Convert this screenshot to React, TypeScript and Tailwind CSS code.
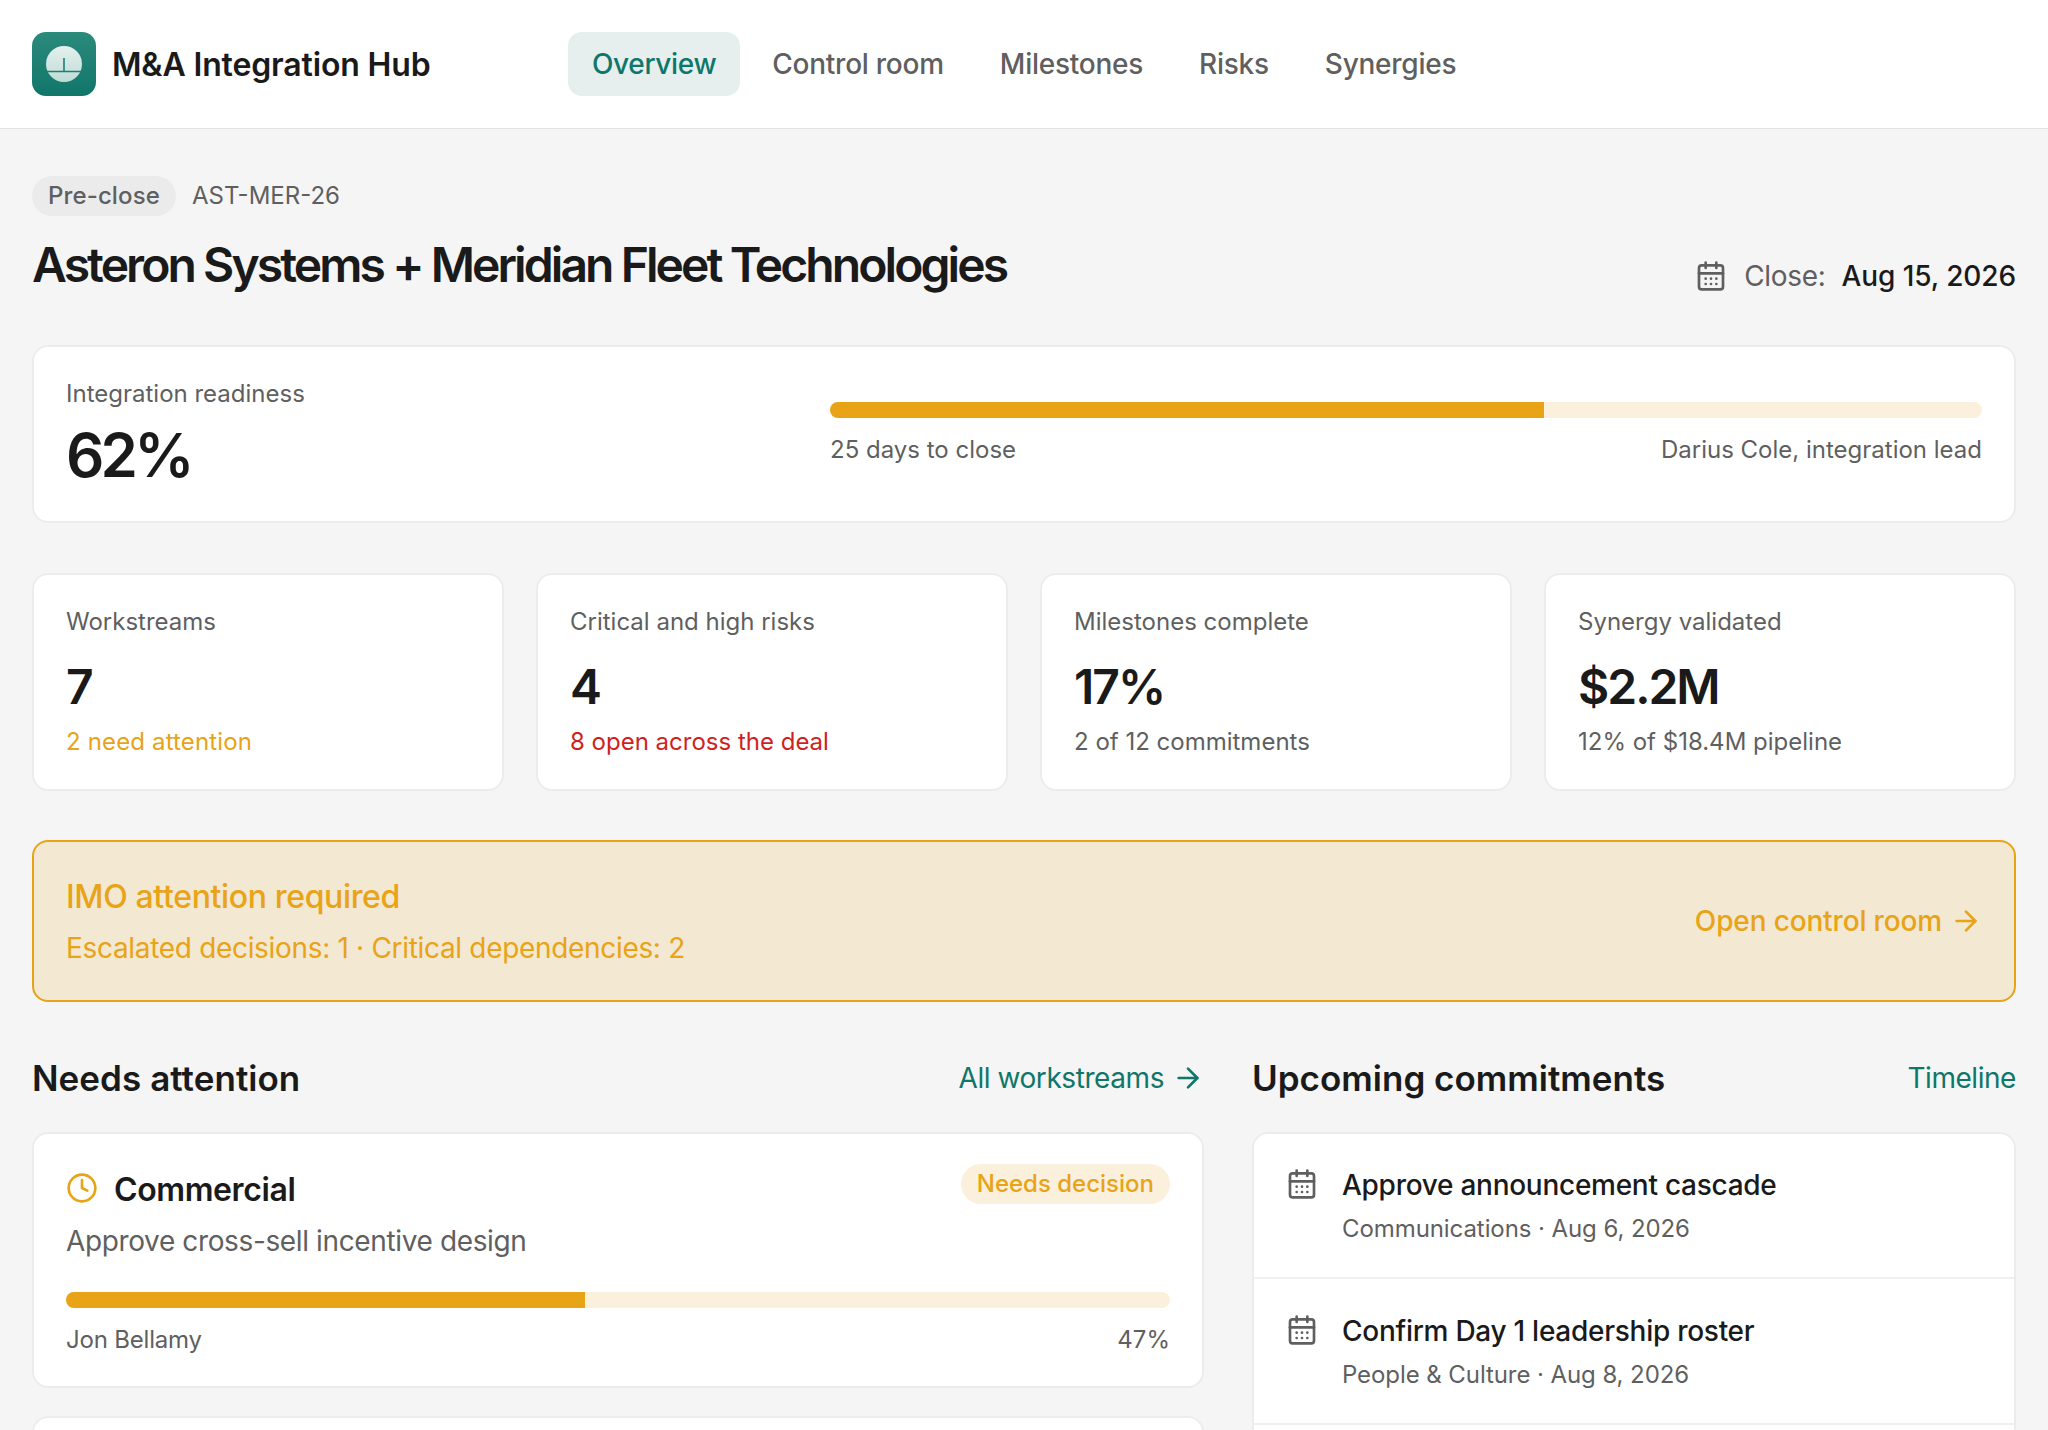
import { ArrowRight, CalendarDays, Clock } from 'lucide-react';

const navLinks = ['Control room', 'Milestones', 'Risks', 'Synergies'];

const stats = [
  { label: 'Workstreams', value: '7', note: '2 need attention', noteClass: 'text-[#e8a317] tracking-[0.15px]' },
  { label: 'Critical and high risks', value: '4', note: '8 open across the deal', noteClass: 'text-[#d01f1f]' },
  { label: 'Milestones complete', value: '17%', note: '2 of 12 commitments', noteClass: 'text-[#5f5f5f]' },
  { label: 'Synergy validated', value: '$2.2M', note: '12% of $18.4M pipeline', noteClass: 'text-[#5f5f5f]' },
];

const commitments = [
  { title: 'Approve announcement cascade', meta: 'Communications · Aug 6, 2026' },
  { title: 'Confirm Day 1 leadership roster', meta: 'People & Culture · Aug 8, 2026' },
];

function Logo() {
  return (
    <div className="flex h-16 w-16 items-center justify-center rounded-[14px] bg-gradient-to-b from-[#2a8a7c] to-[#0f766a]">
      <svg width="36" height="36" viewBox="0 0 36 36">
        <defs>
          <linearGradient id="dial" x1="0" y1="0" x2="0" y2="1">
            <stop offset="0" stopColor="#e4f0ee" />
            <stop offset="1" stopColor="#bfdcd7" />
          </linearGradient>
        </defs>
        <circle cx="18" cy="18" r="18" fill="url(#dial)" />
        <path d="M0 25.5H36" stroke="#1b7f72" strokeWidth="1.4" />
        <path d="M18 12V25" stroke="#1b7f72" strokeWidth="1.6" />
      </svg>
    </div>
  );
}

export default function App() {
  return (
    <div className="h-[1430px] overflow-hidden bg-[#f5f5f5] font-['Inter',sans-serif] text-[#1a1a1a]">
      <header className="flex h-[129px] items-center border-b border-[#e2e2e2] bg-white px-8">
        <div className="flex w-[536px] items-center gap-4">
          <Logo />
          <span className="pt-[2px] text-[32px] font-semibold tracking-[-0.15px]">M&amp;A Integration Hub</span>
        </div>
        <nav className="flex items-center gap-2 text-[28px] font-medium tracking-[-0.25px] text-[#5f5f5f]">
          <a className="flex h-16 items-center rounded-[14px] bg-[#e6efee] px-6 tracking-[-0.35px] text-[#0f766a]">Overview</a>
          {navLinks.map((link) => (
            <a key={link} className="flex h-16 items-center px-6">
              {link}
            </a>
          ))}
        </nav>
      </header>

      <main className="px-8 pt-[47px]">
        <div className="flex items-center gap-4">
          <span className="rounded-full bg-[#ebebeb] px-4 py-1 text-2xl font-medium tracking-[0.12px] text-[#5f5f5f]">Pre-close</span>
          <span className="text-2xl text-[#5f5f5f]">AST-MER-26</span>
        </div>

        <div className="mt-[17px] flex items-end justify-between">
          <h1 className="text-[48px] leading-[64px] font-semibold tracking-[-2.92px]">Asteron Systems + Meridian Fleet Technologies</h1>
          <div className="flex items-center text-[28px]">
            <CalendarDays className="mr-[17px] h-8 w-8 text-[#5f5f5f]" />
            <span className="mr-4 tracking-[-0.3px] text-[#5f5f5f]">Close:</span>
            <span className="font-medium tracking-[-0.1px]">Aug 15, 2026</span>
          </div>
        </div>

        <section className="mt-12 flex h-[178px] justify-between rounded-2xl border-2 border-[#ececec] bg-white px-8 pt-[31px]">
          <div>
            <div className="text-2xl leading-8 text-[#5f5f5f]">Integration readiness</div>
            <div className="mt-[5px] text-[60px] leading-[80px] font-semibold tracking-[-3.8px]">62%</div>
          </div>
          <div className="w-[1152px] pt-[24px]">
            <div className="h-4 overflow-hidden rounded-full bg-[#fbf0dc]">
              <div className="h-full w-[62%] bg-[#e8a317]" />
            </div>
            <div className="mt-4 flex justify-between text-2xl leading-8 text-[#5f5f5f]">
              <span>25 days to close</span>
              <span>Darius Cole, integration lead</span>
            </div>
          </div>
        </section>

        <section className="mt-[50px] grid grid-cols-4 gap-8">
          {stats.map((stat) => (
            <div key={stat.label} className="h-[218px] rounded-2xl border-2 border-[#ececec] bg-white px-8 pt-[31px]">
              <div className="text-2xl leading-8 text-[#5f5f5f]">{stat.label}</div>
              <div className="mt-[17px] text-[48px] leading-[64px] font-semibold tracking-[-2px]">{stat.value}</div>
              <div className={`mt-[7px] text-2xl leading-8 ${stat.noteClass}`}>{stat.note}</div>
            </div>
          ))}
        </section>

        <section className="mt-[49px] flex h-[162px] items-center justify-between rounded-2xl border-2 border-[#e8a317] bg-[#f3e8d2] px-8 text-[#e8a317]">
          <div className="mt-[3px]">
            <div className="text-[32px] leading-10 font-medium tracking-[-0.36px]">IMO attention required</div>
            <div className="mt-[11px] text-[28px] leading-10 tracking-[-0.32px]">Escalated decisions: 1 · Critical dependencies: 2</div>
          </div>
          <a className="flex items-center gap-2 text-[28px] font-medium tracking-[-0.15px]">
            Open control room
            <ArrowRight className="h-8 w-8" />
          </a>
        </section>

        <div className="mt-12 grid grid-cols-[1172px_1fr] gap-12">
          <div>
            <div className="flex h-[56px] items-center justify-between">
              <h2 className="text-[35px] font-semibold tracking-[0.05px]">Needs attention</h2>
              <a className="flex items-center gap-2 text-[28px] tracking-[-0.43px] text-[#0f766a]">
                All workstreams
                <ArrowRight className="h-8 w-8" />
              </a>
            </div>
            <div className="mt-[26px] h-[256px] rounded-2xl border-2 border-[#ececec] bg-white px-8 pt-[30px]">
              <div className="flex items-start justify-between">
                <div className="mt-1 flex items-center gap-4">
                  <Clock className="mb-1 h-8 w-8 text-[#e8a317]" />
                  <span className="text-[32px] leading-[44px] font-semibold tracking-[-0.4px]">Commercial</span>
                </div>
                <span className="rounded-full bg-[#fbf0dc] px-4 py-1 text-2xl font-medium text-[#e8a317]">Needs decision</span>
              </div>
              <div className="mt-[9px] text-[28px] leading-10 tracking-[-0.37px] text-[#5f5f5f]">Approve cross-sell incentive design</div>
              <div className="mt-[31px] h-4 overflow-hidden rounded-full bg-[#fbf0dc]">
                <div className="h-full w-[47%] bg-[#e8a317]" />
              </div>
              <div className="mt-4 flex justify-between text-2xl leading-8 text-[#5f5f5f]">
                <span className="tracking-[-0.2px]">Jon Bellamy</span>
                <span>47%</span>
              </div>
            </div>
            <div className="mt-7 h-[200px] rounded-2xl border-2 border-[#ececec] bg-white" />
          </div>

          <div>
            <div className="flex h-[56px] items-center justify-between">
              <h2 className="text-[35px] font-semibold">Upcoming commitments</h2>
              <a className="text-[28px] tracking-[-0.45px] text-[#0f766a]">Timeline</a>
            </div>
            <div className="mt-[26px] overflow-hidden rounded-2xl border-2 border-[#ececec] bg-white">
              {commitments.map((item) => (
                <div key={item.title} className="flex h-[146px] gap-6 border-b-2 border-[#f0f0f0] px-8 pt-[32px] first:h-[145px] first:pt-[31px]">
                  <CalendarDays className="mt-[3px] h-8 w-8 text-[#5f5f5f]" />
                  <div>
                    <div className="text-[28px] leading-10 font-medium tracking-[-0.27px]">{item.title}</div>
                    <div className="mt-2 text-2xl leading-8 tracking-[-0.08px] text-[#5f5f5f]">{item.meta}</div>
                  </div>
                </div>
              ))}
              <div className="h-[100px]" />
            </div>
          </div>
        </div>
      </main>
    </div>
  );
}
